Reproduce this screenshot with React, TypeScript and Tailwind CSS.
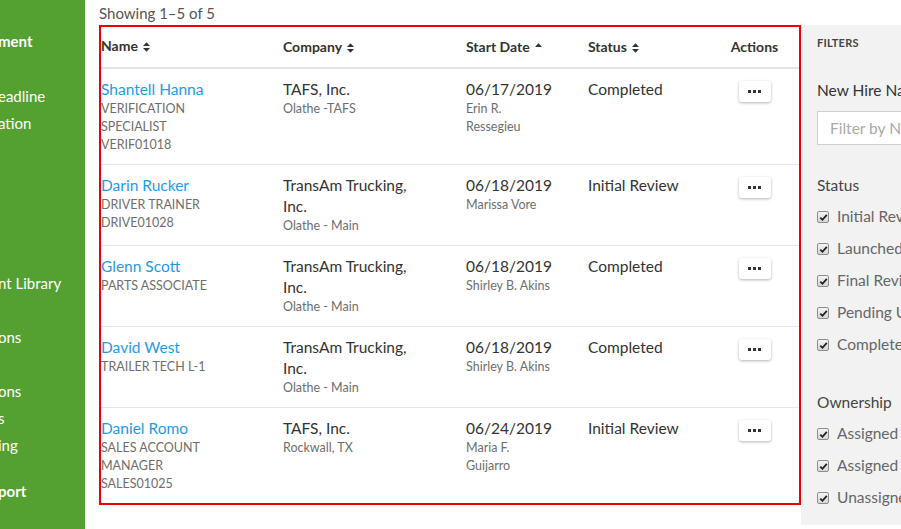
import React from "react";

interface Hire {
    name: string;
    title: string;
    code?: string;
    company: string;
    location: string;
    startDate: string;
    owner: string;
    status: string;
}

const hires: Hire[] = [
    {
        name: "Shantell Hanna",
        title: "VERIFICATION SPECIALIST",
        code: "VERIF01018",
        company: "TAFS, Inc.",
        location: "Olathe -TAFS",
        startDate: "06/17/2019",
        owner: "Erin R. Ressegieu",
        status: "Completed",
    },
    {
        name: "Darin Rucker",
        title: "DRIVER TRAINER",
        code: "DRIVE01028",
        company: "TransAm Trucking, Inc.",
        location: "Olathe - Main",
        startDate: "06/18/2019",
        owner: "Marissa Vore",
        status: "Initial Review",
    },
    {
        name: "Glenn Scott",
        title: "PARTS ASSOCIATE",
        company: "TransAm Trucking, Inc.",
        location: "Olathe - Main",
        startDate: "06/18/2019",
        owner: "Shirley B. Akins",
        status: "Completed",
    },
    {
        name: "David West",
        title: "TRAILER TECH L-1",
        company: "TransAm Trucking, Inc.",
        location: "Olathe - Main",
        startDate: "06/18/2019",
        owner: "Shirley B. Akins",
        status: "Completed",
    },
    {
        name: "Daniel Romo",
        title: "SALES ACCOUNT MANAGER",
        code: "SALES01025",
        company: "TAFS, Inc.",
        location: "Rockwall, TX",
        startDate: "06/24/2019",
        owner: "Maria F. Guijarro",
        status: "Initial Review",
    },
];

// sidebar is scrolled sideways, only the tail of each label shows
const navItems = [
    { label: "ment", bold: true, mt: "mt-[28px]" },
    { label: "eadline", bold: false, mt: "mt-[28px]" },
    { label: "ation", bold: false, mt: "mt-0" },
    { label: "nt Library", bold: false, mt: "mt-[133px]" },
    { label: "ons", bold: false, mt: "mt-[27px]" },
    { label: "ons", bold: false, mt: "mt-[27px]" },
    { label: "s", bold: false, mt: "mt-0" },
    { label: "ing", bold: false, mt: "mt-0" },
    { label: "port", bold: true, mt: "mt-[19px]" },
];

const statusFilters = ["Initial Review", "Launched", "Final Review", "Pending Upload", "Completed"];
const ownershipFilters = ["Assigned to Me", "Assigned to Others", "Unassigned"];

const SortIcon = ({ up }: { up?: boolean }) => (
    <svg width="7" height="10" viewBox="0 0 7 10" className="ml-[5px] inline-block" aria-hidden="true">
        <path d="M0 4 L3.5 0.3 L7 4 Z" fill="#333" />
        {!up && <path d="M0 6 L3.5 9.7 L7 6 Z" fill="#333" />}
    </svg>
);

const Checkbox = () => (
    <span className="flex h-[12px] w-[12px] items-center justify-center rounded-[2px] border border-[#8d8d8d] bg-gradient-to-b from-[#f4f4f4] to-[#d6d6d6]">
        <svg width="9" height="9" viewBox="0 0 9 9" aria-hidden="true">
            <path d="M1.3 4.6 L3.5 6.8 L7.8 1.8" stroke="#222" strokeWidth="1.8" fill="none" />
        </svg>
    </span>
);

const FilterGroup = ({ title, items }: { title: string; items: string[] }) => (
    <div>
        <p className="text-[15.5px] leading-[21px] text-[#444]">{title}</p>
        <ul className="mt-[5px]">
            {items.map((item) => (
                <li key={item} className="flex h-[32px] items-center gap-[8px] whitespace-nowrap">
                    <Checkbox />
                    <span className="text-[15.5px] text-[#666]">{item}</span>
                </li>
            ))}
        </ul>
    </div>
);

export default function App() {
    return (
        <div className="flex h-screen w-screen overflow-hidden bg-white font-['Lato',sans-serif]">
            <aside className="w-[85px] shrink-0 overflow-hidden bg-[#54a031] text-white">
                <ul>
                    {navItems.map((item, i) => (
                        <li
                            key={i}
                            className={`${item.mt} -ml-[2px] h-[27px] whitespace-nowrap text-[15px] leading-[27px] ${
                                item.bold ? "font-bold" : ""
                            }`}
                        >
                            {item.label}
                        </li>
                    ))}
                </ul>
            </aside>

            <main className="w-[716px] shrink-0 pl-[14px]">
                <p className="h-[25px] pt-[3px] text-[15px] leading-[21px] text-[#555]">Showing 1–5 of 5</p>
                <div className="border-2 border-[#ec0000]">
                    <table className="w-full table-fixed border-collapse text-left">
                        <colgroup>
                            <col className="w-[182px]" />
                            <col className="w-[183px]" />
                            <col className="w-[122px]" />
                            <col className="w-[122px]" />
                            <col />
                        </colgroup>
                        <thead>
                            <tr className="border-b-2 border-[#e4e4e4] text-[14px] font-bold text-[#333]">
                                <th className="pt-[10px] pb-[12px] leading-[18px]">
                                    Name
                                    <SortIcon />
                                </th>
                                <th className="leading-[18px]">
                                    Company
                                    <SortIcon />
                                </th>
                                <th className="leading-[18px]">
                                    Start Date
                                    <SortIcon up />
                                </th>
                                <th className="leading-[18px]">
                                    Status
                                    <SortIcon />
                                </th>
                                <th className="text-center leading-[18px]">Actions</th>
                            </tr>
                        </thead>
                        <tbody>
                            {hires.map((hire, i) => (
                                <tr
                                    key={hire.name}
                                    className={`align-top ${i < hires.length - 1 ? "border-b border-[#e6e6e6]" : ""}`}
                                >
                                    <td className="py-[10px] pr-[45px]">
                                        <a href="#" className="block text-[15.5px] leading-[21px] text-[#1f9be6]">
                                            {hire.name}
                                        </a>
                                        <p className="text-[12.5px] leading-[18px] text-[#6e6e6e]">{hire.title}</p>
                                        {hire.code && (
                                            <p className="text-[12.5px] leading-[18px] text-[#6e6e6e]">{hire.code}</p>
                                        )}
                                    </td>
                                    <td className="py-[10px] pr-[40px]">
                                        <p className="text-[15.5px] leading-[21px] text-[#333]">{hire.company}</p>
                                        <p className="text-[12.5px] leading-[18px] text-[#6e6e6e]">{hire.location}</p>
                                    </td>
                                    <td className="py-[10px] pr-[34px]">
                                        <p className="text-[15.5px] leading-[21px] text-[#333]">{hire.startDate}</p>
                                        <p className="text-[12.5px] leading-[18px] text-[#6e6e6e]">{hire.owner}</p>
                                    </td>
                                    <td className="py-[10px] text-[15.5px] leading-[21px] text-[#333]">
                                        {hire.status}
                                    </td>
                                    <td className="pt-[12px] pb-[10px]">
                                        <div className="flex justify-center">
                                            <button className="flex h-[21px] w-[32px] items-center justify-center gap-[2px] rounded-[3px] bg-white shadow-[0_1px_3px_rgba(0,0,0,0.3)]">
                                                <span className="h-[3px] w-[3px] bg-[#333]" />
                                                <span className="h-[3px] w-[3px] bg-[#333]" />
                                                <span className="h-[3px] w-[3px] bg-[#333]" />
                                            </button>
                                        </div>
                                    </td>
                                </tr>
                            ))}
                        </tbody>
                    </table>
                </div>
            </main>

            <aside className="mt-[25px] h-[500px] w-[260px] shrink-0 bg-[#f2f2f2] pl-[16px] pt-[11px]">
                <h3 className="text-[11px] font-bold leading-[14px] tracking-[0.2px] text-[#444]">FILTERS</h3>
                <p className="mt-[30px] text-[15.5px] leading-[21px] text-[#333]">New Hire Name</p>
                <input
                    className="mt-[10px] h-[34px] w-[230px] border border-[#cfcfcf] bg-white px-[12px] text-[15.5px] placeholder:text-[#aaa]"
                    placeholder="Filter by Name"
                />
                <div className="mt-[30px]">
                    <FilterGroup title="Status" items={statusFilters} />
                </div>
                <div className="mt-[31px]">
                    <FilterGroup title="Ownership" items={ownershipFilters} />
                </div>
            </aside>
        </div>
    );
}
